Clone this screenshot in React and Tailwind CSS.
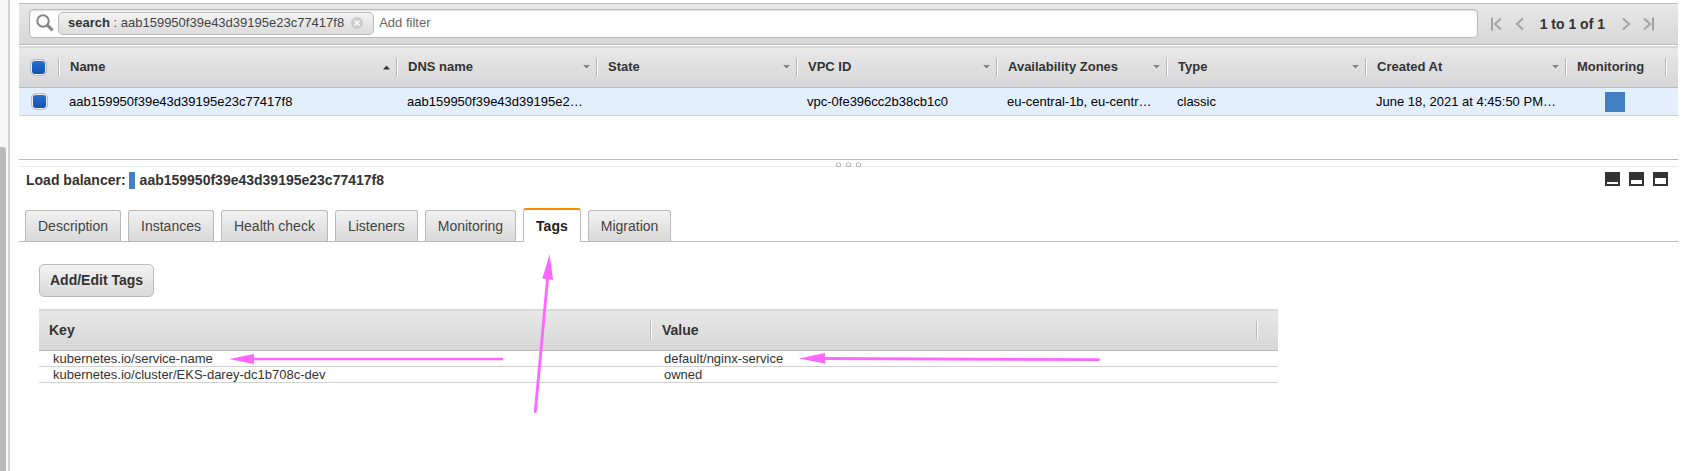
import React from "react";

const columns = [
  { label: "Name", width: "w-auto", sort: "asc" },
  { label: "DNS name", width: "w-[200px]", sort: "none" },
  { label: "State", width: "w-[200px]", sort: "none" },
  { label: "VPC ID", width: "w-[200px]", sort: "none" },
  { label: "Availability Zones", width: "w-[170px]", sort: "none" },
  { label: "Type", width: "w-[199px]", sort: "none" },
  { label: "Created At", width: "w-[200px]", sort: "none" },
  { label: "Monitoring", width: "w-[100px]", sort: null },
];

const cells = [
  "aab159950f39e43d39195e23c77417f8",
  "aab159950f39e43d39195e2…",
  "",
  "vpc-0fe396cc2b38cb1c0",
  "eu-central-1b, eu-centr…",
  "classic",
  "June 18, 2021 at 4:45:50 PM…",
];

const tabs = ["Description", "Instances", "Health check", "Listeners", "Monitoring", "Tags", "Migration"];

const tags = [
  ["kubernetes.io/service-name", "default/nginx-service"],
  ["kubernetes.io/cluster/EKS-darey-dc1b708c-dev", "owned"],
];

function Check({ label }) {
  return (
    <input
      type="checkbox"
      defaultChecked
      aria-label={label}
      className="block size-[17px] appearance-none rounded-[5px] border border-[#bdbdbd] bg-[#e9e9e9] bg-clip-padding checked:bg-linear-to-b checked:from-[#2a72d4] checked:to-[#0f4fae] checked:shadow-[inset_0_0_0_1px_#eeeeee]"
    />
  );
}

function Divider() {
  return <span className="block h-[18px] w-[2px] shrink-0 border-r border-l border-r-white border-l-[#b5b5b5]" />;
}

function SortMark({ sort }) {
  return sort === "asc" ? (
    <svg width="7" height="5" viewBox="0 0 7 5" aria-hidden="true">
      <path d="M0 4.5 3.5 0.5 7 4.5Z" fill="#333" />
    </svg>
  ) : (
    <svg width="7" height="6" viewBox="0 0 7 6" aria-hidden="true">
      <path d="M0 2 3.5 6 7 2Z" fill="#fff" />
      <path d="M0 1 3.5 5 7 1Z" fill="#888" />
    </svg>
  );
}

function PagerButton({ label, d }) {
  return (
    <button type="button" aria-label={label} className="text-[#a3a3a3]">
      <svg width="12" height="14" viewBox="0 0 12 14" fill="none" stroke="currentColor" strokeWidth="2" aria-hidden="true">
        <path d={d} />
      </svg>
    </button>
  );
}

function PaneButton({ label, top, height }) {
  return (
    <button type="button" aria-label={label}>
      <svg width="15" height="14" viewBox="0 0 15 14" className="block" aria-hidden="true">
        <rect width="15" height="14" fill="#333" />
        <rect x="2" y={top} width="11" height={height} fill="#fff" />
      </svg>
    </button>
  );
}

function SearchBar() {
  return (
    <div className="flex h-[42px] items-center border-y border-[#bcbcbc] bg-linear-to-b from-[#e8e8e8] to-[#d7d7d7] pr-[23px] pb-[2px] pl-[10px]">
      <div className="flex h-[29px] grow items-center rounded-[4px] border border-[#bbb] bg-white pl-[6px] shadow-[inset_0_1px_2px_#ddd]">
        <svg width="18" height="18" viewBox="0 0 18 18" fill="none" stroke="#858585" className="mr-[4px]" aria-hidden="true">
          <circle cx="7" cy="7" r="5.7" strokeWidth="2" />
          <path d="M11.2 11.2 16.6 16.4" strokeWidth="3" />
        </svg>
        <span className="flex h-[23px] items-center rounded-[5px] border border-[#bbb] bg-linear-to-b from-[#f3f3f3] to-[#dcdcdc] pr-[10px] pl-[9px] text-[13px] text-[#444]">
          <b className="text-[#333]">search</b>
          <span className="whitespace-pre"> : aab159950f39e43d39195e23c77417f8</span>
          <button type="button" aria-label="Remove filter" className="ml-[7px]">
            <svg width="12" height="12" viewBox="0 0 12 12" className="block" aria-hidden="true">
              <circle cx="6" cy="6" r="6" fill="#cbcbcb" />
              <path d="M3.5 3.5 8.5 8.5M8.5 3.5 3.5 8.5" stroke="#fff" strokeWidth="1.5" />
            </svg>
          </button>
        </span>
        <input
          type="text"
          aria-label="Add filter"
          placeholder="Add filter"
          className="ml-[5px] min-w-0 grow bg-transparent text-[13px] outline-none placeholder:text-[#666]"
        />
      </div>
      <nav aria-label="Pages" className="ml-[12px] flex items-center gap-[13px] pt-[2px]">
        <PagerButton label="First page" d="M2 0.5V13.5M11 1.5 5 7 11 12.5" />
        <PagerButton label="Previous page" d="M8 1.5 2 7 8 12.5" />
        <span className="text-[14px] font-bold whitespace-nowrap text-[#333]">1 to 1 of 1</span>
        <span className="flex gap-[10px] pl-[3px]">
          <PagerButton label="Next page" d="M2 1.5 8 7 2 12.5" />
          <PagerButton label="Last page" d="M1 1.5 7 7 1 12.5M10 0.5V13.5" />
        </span>
      </nav>
    </div>
  );
}

function BalancerTable() {
  return (
    <table className="mt-px w-full table-fixed border-collapse text-left text-[13px]">
      <thead>
        <tr className="h-[41px] border-t border-b border-t-[#d9d9d9] border-b-[#b9b9b9] bg-linear-to-b from-[#e8e8e8] to-[#d7d7d7] text-[#333]">
          <th className="w-[39px] p-0 pl-[11px]">
            <Check label="Select all load balancers" />
          </th>
          {columns.map((c) => (
            <th key={c.label} className={`${c.width} p-0`}>
              <div className="flex items-center">
                <Divider />
                <button type="button" className="flex grow items-center justify-between pr-[6px] pl-[10px] font-bold whitespace-nowrap">
                  {c.label}
                  {c.sort && <SortMark sort={c.sort} />}
                </button>
              </div>
            </th>
          ))}
          <th className="w-[13px] p-0">
            <Divider />
          </th>
        </tr>
      </thead>
      <tbody>
        <tr className="h-[28px] border-b border-[#c9d3de] bg-[#e3effd] text-black">
          <td className="p-0 pl-[12px]">
            <Check label="Select aab159950f39e43d39195e23c77417f8" />
          </td>
          {cells.map((c, i) => (
            <td key={i} className="p-0 pl-[11px] whitespace-nowrap">
              {c}
            </td>
          ))}
          <td className="p-0">
            <div className="mx-auto size-5 bg-[#427fc3]" />
          </td>
          <td className="p-0" />
        </tr>
      </tbody>
    </table>
  );
}

function Handle() {
  return (
    <div className="mt-[43px] flex h-[8px] items-end justify-center border-t border-b border-t-[#bbb] border-b-[#ebebeb]">
      <svg width="25" height="5" viewBox="0 0 25 5" fill="none" stroke="#b5b5b5" className="-mb-px" aria-hidden="true">
        <path d="M0.5 4.5V1.5Q2.5 -0.5 4.5 1.5V4.5ZM10.5 4.5V1.5Q12.5 -0.5 14.5 1.5V4.5ZM20.5 4.5V1.5Q22.5 -0.5 24.5 1.5V4.5Z" />
      </svg>
    </div>
  );
}

function Details() {
  return (
    <section>
      <header className="flex h-[41px] items-start pt-[4px] pr-[10px] pl-[7px] text-[14px] font-bold text-[#333]">
        <h2 className="flex h-[18px] items-center">
          Load balancer:
          <span className="mr-[5px] ml-[3px] h-[17px] w-[6px] shrink-0 bg-[#427fc3]" />
          aab159950f39e43d39195e23c77417f8
        </h2>
        <div className="ml-auto flex gap-[9px] pt-px">
          <PaneButton label="Minimise pane" top={10} height={2} />
          <PaneButton label="Split pane" top={8} height={4} />
          <PaneButton label="Maximise pane" top={6} height={6} />
        </div>
      </header>

      <div role="tablist" className="flex items-end gap-[7px] border-b border-[#bbb] pl-[6px] text-[14px] text-[#444]">
        {tabs.map((t) => (
          <button
            key={t}
            type="button"
            role="tab"
            aria-selected={t === "Tags"}
            className={
              t === "Tags"
                ? "-mb-px h-[34px] rounded-t-[3px] border-x border-t-2 border-x-[#bbb] border-t-[#ff8a00] bg-white px-[12px] pt-px font-bold text-[#222]"
                : "h-[31px] rounded-t-[3px] border border-b-0 border-[#bbb] bg-linear-to-b from-[#f2f2f2] to-[#d8d8d8] px-[12px]"
            }
          >
            {t}
          </button>
        ))}
      </div>

      <div className="pt-[22px] pr-[400px] pl-5">
        <button
          type="button"
          className="h-[33px] rounded-[5px] border border-[#b9b9b9] bg-linear-to-b from-[#f3f3f3] to-[#d9d9d9] px-[10px] text-[14px] font-bold text-[#333]"
        >
          Add/Edit Tags
        </button>
        <table className="mt-[12px] w-full table-fixed border-collapse text-left text-[13px] text-[#333]">
          <thead>
            <tr className="h-[41px] border-t border-b border-t-[#d9d9d9] border-b-[#b9b9b9] bg-linear-to-b from-[#e8e8e8] to-[#d7d7d7] text-[14px]">
              <th className="p-0 pl-[10px]">Key</th>
              <th className="w-[606px] p-0">
                <div className="flex items-center gap-[10px]">
                  <Divider />
                  Value
                </div>
              </th>
              <th className="w-[22px] p-0">
                <Divider />
              </th>
            </tr>
          </thead>
          <tbody>
            {tags.map(([k, v]) => (
              <tr key={k} className="h-4 border-b border-[#d2d2d2] leading-[15px]">
                <td className="p-0 pl-[14px]">{k}</td>
                <td className="p-0 pl-[14px]">{v}</td>
                <td className="p-0" />
              </tr>
            ))}
          </tbody>
        </table>
      </div>
    </section>
  );
}

function Annotations() {
  return (
    <svg
      width="1110"
      height="420"
      viewBox="0 0 1110 420"
      className="pointer-events-none absolute top-0 left-0"
      fill="#ff66ff"
      stroke="#ff66ff"
      strokeLinecap="round"
      aria-hidden="true"
    >
      <path d="M229 359 254 354V364Z" stroke="none" />
      <path d="M252 359H502" strokeWidth="2.6" />
      <path d="M799 358.5 825 353V363.5Z" stroke="none" />
      <path d="M824 358.5 1098.5 359.7" strokeWidth="2.8" />
      <path d="M549.7 254 542.3 278.6 553 280Z" stroke="none" />
      <path d="M547.5 279 535.3 411.5" strokeWidth="2.8" />
    </svg>
  );
}

export default function App() {
  return (
    <div className="relative flex min-h-screen bg-white font-['Liberation_Sans',Arial,sans-serif]">
      <div className="flex w-[10px] shrink-0 border-r-2 border-[#d4d4d4] bg-[#f7f7f7] pt-[147px]">
        <div className="w-[6px] rounded-tr-[3px] bg-[#b9b9b9]" />
      </div>
      <main className="min-w-0 grow pt-[3px] pr-1 pl-[9px]">
        <SearchBar />
        <BalancerTable />
        <Handle />
        <Details />
      </main>
      <Annotations />
    </div>
  );
}
